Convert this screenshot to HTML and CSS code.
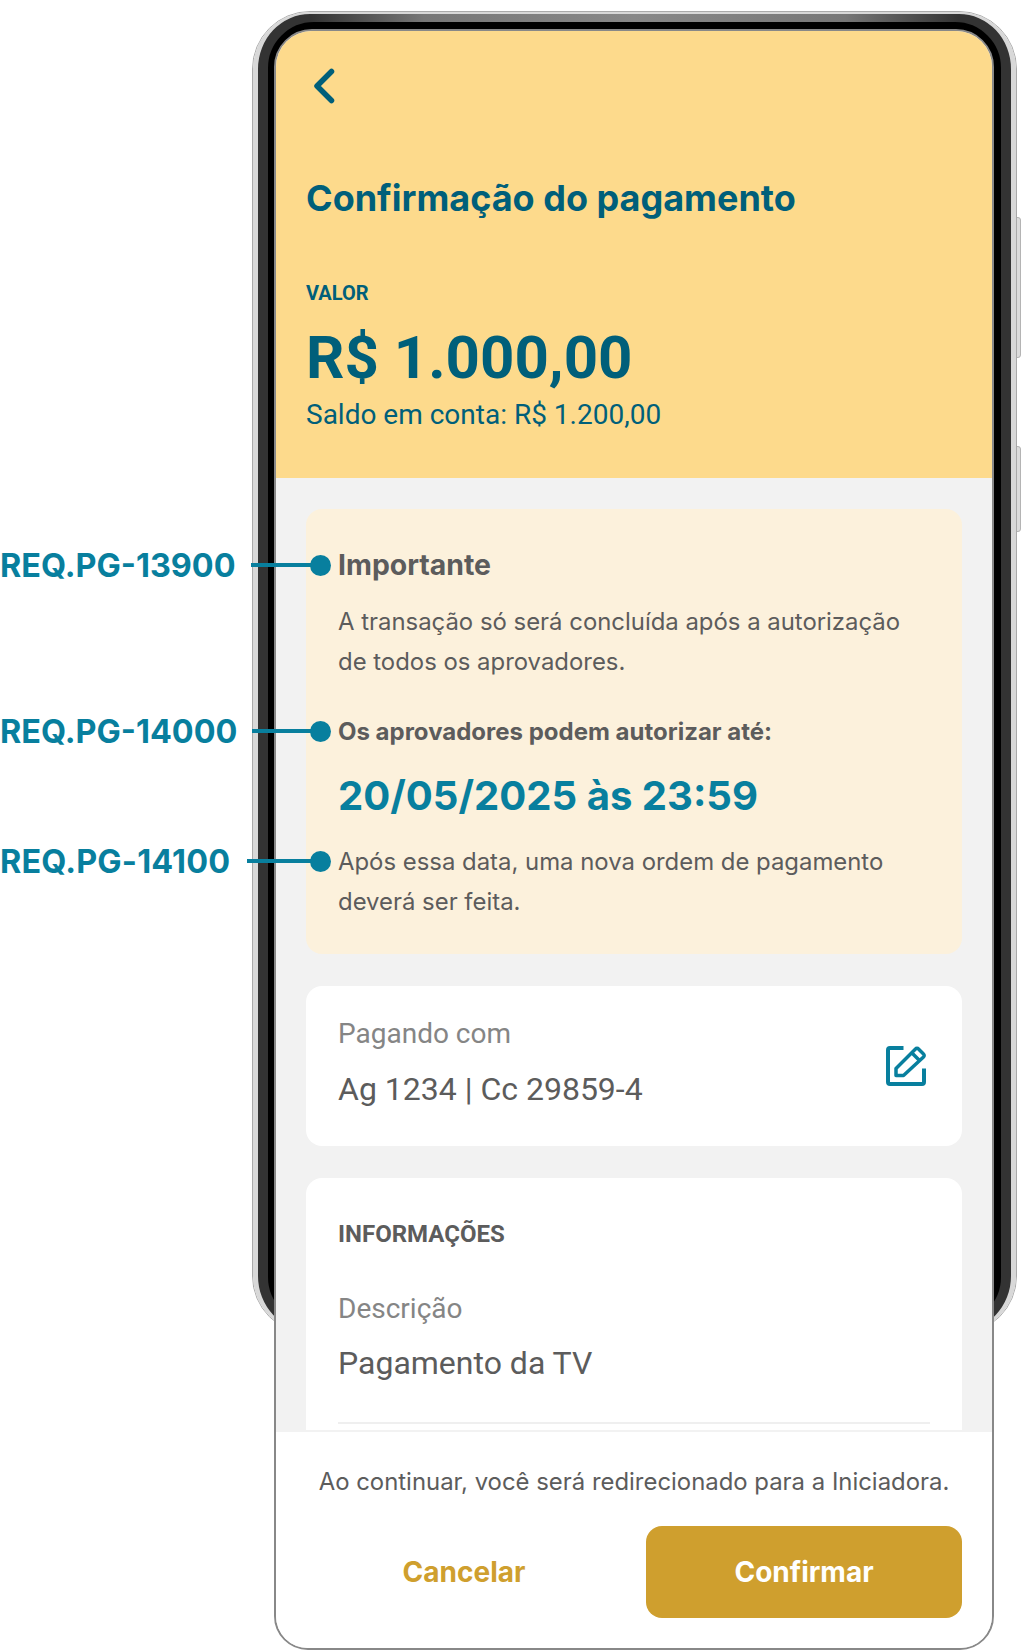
FILE: index.html
```html
<!DOCTYPE html>
<html lang="pt-BR">
<head>
    <meta charset="UTF-8">
    <meta name="viewport" content="width=device-width, initial-scale=1.0">
    <title>Confirmação do pagamento</title>
    <link rel="stylesheet" href="styles.css">
</head>
<body>
    <div class="stage">
        <!-- Moldura do aparelho -->
        <div class="phone-btn phone-btn-a"></div>
        <div class="phone-btn phone-btn-b"></div>
        <div class="phone"><div class="phone-rim"><div class="phone-inner"></div></div></div>

        <main class="screen">
            <header class="top">
                <svg class="back" width="22" height="36" viewBox="0 0 22 36" fill="none"><path d="M18.500 3.500 4 18l14.500 14.500" stroke="#005f7a" stroke-width="5.500" stroke-linecap="round" stroke-linejoin="round"/></svg>
                <h1>Confirmação do pagamento</h1>
                <div class="value-label">VALOR</div>
                <div class="value">R$ 1.000,00</div>
                <div class="balance">Saldo em conta: R$ 1.200,00</div>
            </header>

            <div class="content">
                <section class="card card-warn">
                    <h2>Importante</h2>
                    <p class="text">A transação só será concluída após a autorização de todos os aprovadores.</p>
                    <h3>Os aprovadores podem autorizar até:</h3>
                    <div class="deadline">20/05/2025 às 23:59</div>
                    <p class="text">Após essa data, uma nova ordem de pagamento deverá ser feita.</p>
                </section>

                <section class="card card-pay">
                    <div class="pay-info">
                        <div class="field-label">Pagando com</div>
                        <div class="field-value">Ag 1234 | Cc 29859-4</div>
                    </div>
                    <svg class="edit" width="40" height="40" viewBox="0 0 40 40" fill="none">
                        <path d="M17.500 2H4a2 2 0 0 0-2 2v32a2 2 0 0 0 2 2h32a2 2 0 0 0 2-2V22.500" stroke="#087f9e" stroke-width="4"/>
                        <path d="M10 29.500v-7L29.500 3a2 2 0 0 1 3 0L37.500 8a2 2 0 0 1 0 3L17.500 29.500zM26 7l7.500 7.500" stroke="#087f9e" stroke-width="3.500" stroke-linejoin="round"/>
                    </svg>
                </section>

                <section class="card card-info">
                    <h4>INFORMAÇÕES</h4>
                    <div class="field-label">Descrição</div>
                    <div class="field-value">Pagamento da TV</div>
                    <div class="rule"></div>
                </section>
            </div>

            <footer class="bottom">
                <p>Ao continuar, você será redirecionado para a Iniciadora.</p>
                <div class="actions">
                    <button class="btn-text">Cancelar</button>
                    <button class="btn-main">Confirmar</button>
                </div>
            </footer>
        </main>

        <!-- Marcadores de requisito -->
        <div class="req req-1"><span class="req-name">REQ.PG-13900</span><i class="req-line"></i><i class="req-dot"></i></div>
        <div class="req req-2"><span class="req-name">REQ.PG-14000</span><i class="req-line"></i><i class="req-dot"></i></div>
        <div class="req req-3"><span class="req-name">REQ.PG-14100</span><i class="req-line"></i><i class="req-dot"></i></div>
    </div>
</body>
</html>
```

FILE: styles.css
```css
* { box-sizing: border-box; }
html, body { margin: 0; background: #fff; }
body { font-family: Inter, "Noto Sans", sans-serif; }
h1, h2, h3, h4, p { margin: 0; }

.stage { position: relative; width: 1022px; height: 1650px; padding: 29px 28px 0 274px; overflow: hidden; }

/* aparelho */
.phone { position: absolute; left: 252px; top: 11px; width: 765px; height: 1323px; border: 1px solid #aaa; border-radius: 58px; }
.phone-rim { height: 100%; padding: 8px 10px; border: solid #d8d8d8; border-width: 2px 5px; border-radius: 57px; background: linear-gradient(90deg, #333 0, #333 7%, #777 22%, #888 50%, #777 78%, #333 93%, #333 100%); }
.phone-inner { height: 100%; border: 8px solid #000; border-radius: 46px; background: #3f3f3f; }
.phone-btn { position: absolute; left: 1014px; width: 7px; border: 1px solid #b4b4b4; border-radius: 3px; background: #dcdcdc; }
.phone-btn-a { top: 217px; height: 141px; }
.phone-btn-b { top: 446px; height: 86px; }

/* tela */
.screen { position: relative; display: flex; flex-direction: column; height: 1621px; border: 2px solid #888; border-radius: 38px 38px 34px 34px; overflow: hidden; background: #f2f2f2; }

.top { height: 447px; padding: 37px 30px 0; background: #fdda8c; color: #005f7a; flex-shrink: 0; }
.back { display: block; margin-left: 7px; }
.top h1 { margin-top: 72px; font-size: 36px; line-height: 44px; font-weight: 700; }
.value-label { margin-top: 61px; font: 700 20px/24px Roboto, sans-serif; }
.value { margin-top: 17px; font: 700 60px/72px Roboto, sans-serif; }
.balance { margin-top: 4px; font: 400 28px/34px Roboto, sans-serif; }

.content { flex: 1; min-height: 0; overflow: hidden; padding: 31px 30px 0; display: flex; flex-direction: column; gap: 32px; }
.card { border-radius: 16px; background: #fff; flex-shrink: 0; }

.card-warn { height: 445px; padding: 38px 32px 0; background: #fcf1dc; color: #5c5c5c; }
.card-warn h2 { font-size: 28.400px; line-height: 36px; font-weight: 700; }
.text { margin-top: 19px; font-size: 23.900px; line-height: 40px; }
.card-warn h3 { margin-top: 34px; font-size: 24px; line-height: 32px; font-weight: 700; }
.deadline { margin-top: 20px; font-size: 40.100px; line-height: 56px; font-weight: 700; color: #087f9e; }
.deadline + .text { margin-top: 18px; }

.card-pay { height: 160px; padding: 0 32px; display: flex; justify-content: space-between; align-items: center; }
.pay-info { padding-bottom: 7px; }
.field-label { font: 400 28px/36px Roboto, sans-serif; color: #858585; }
.field-value { margin-top: 17px; font: 400 32px/40px Roboto, sans-serif; color: #5c5c5c; }
.edit { margin-right: 4px; }

.card-info { height: 300px; padding: 40px 32px 0; }
.card-info h4 { font: 700 24px/32px Roboto, sans-serif; color: #5c5c5c; margin-bottom: 41px; }
.card-info .field-value { margin-top: 16px; }
.rule { margin-top: 39px; height: 2px; background: #efefef; }

.bottom { flex-shrink: 0; height: 218px; padding: 34px 0 0; background: #fff; border-top: 2px solid #f2f2f2; }
.bottom p { text-align: center; font-size: 23.900px; line-height: 32px; color: #5c5c5c; }
.actions { display: flex; justify-content: space-between; margin-top: 28px; padding: 0 30px; align-items: center; }
.actions button { width: 316px; height: 92px; font-family: inherit; font-size: 28px; font-weight: 700; border: none; cursor: pointer; }
.btn-text { background: none; color: #cf9f2e; }
.btn-main { border-radius: 16px; background: #cf9f2e; color: #fff; }

/* marcadores */
.req { position: absolute; left: 0; height: 40px; width: 331px; display: flex; align-items: center; color: #087f9e; }
.req-1 { top: 545px; }
.req-2 { top: 711px; }
.req-3 { top: 841px; }
.req-name { position: relative; top: 1px; font-size: 32.400px; line-height: 40px; font-weight: 700; white-space: nowrap; }
.req-3 .req-name { letter-spacing: .17px; }
.req-line { flex: 1; height: 4px; margin-left: 15px; background: #087f9e; }
.req-3 .req-line { margin-left: 17px; }
.req-dot { width: 21px; height: 21px; margin-left: -1px; border-radius: 50%; background: #087f9e; flex-shrink: 0; }
```
